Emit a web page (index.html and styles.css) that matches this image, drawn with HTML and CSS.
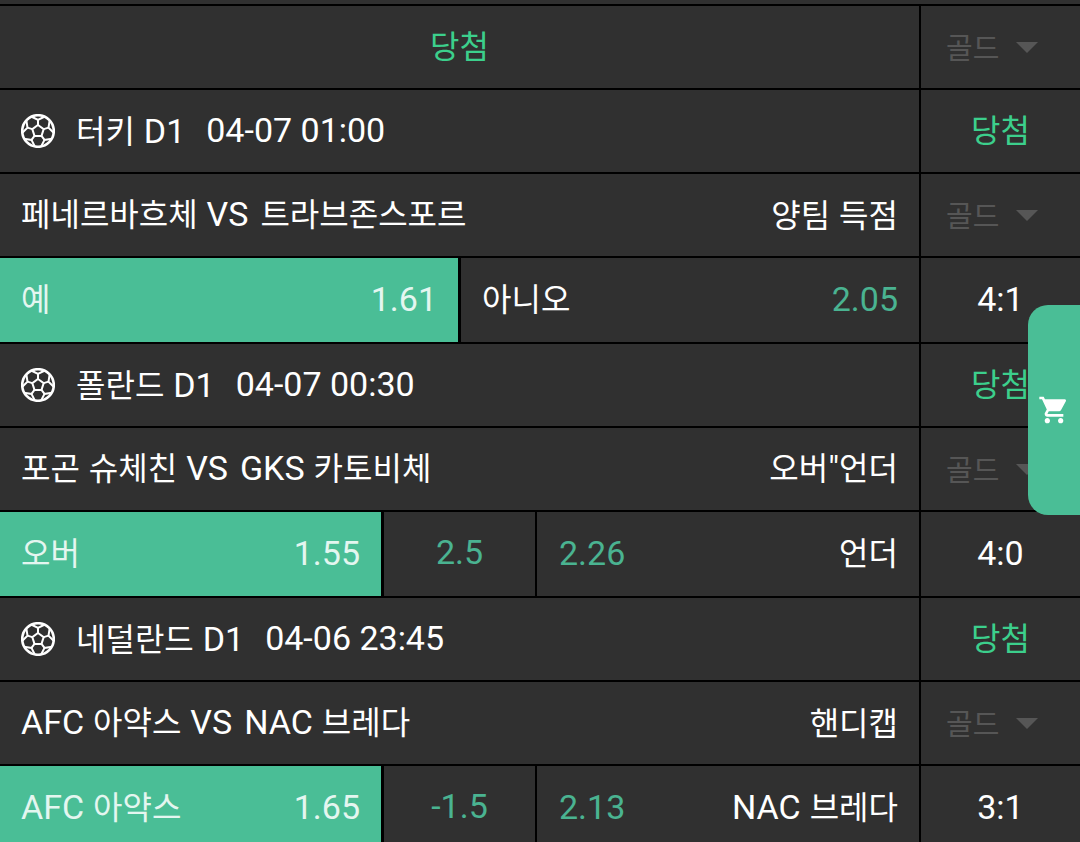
FILE: index.html
```html
<!DOCTYPE html>
<html lang="ko">
<head>
    <meta charset="UTF-8">
    <title>당첨 내역</title>
    <link rel="stylesheet" href="styles.css">
</head>
<body>
    <svg class="sprite" width="0" height="0">
        <symbol id="ball" viewBox="0 0 34 34">
            <g fill="none" stroke="#fff" stroke-width="2">
                <circle cx="17" cy="17" r="15.8" stroke-width="2.6"/>
                <path d="M17 11l5.7 4.1-2.2 6.8h-7l-2.2-6.8z"/>
                <path d="M17 11V6M22.7 15.1l4.8-1.5M20.5 21.9l3 4M13.5 21.9l-3 4M11.3 15.1l-4.8-1.5"/>
                <path d="M10.2 2.5L17 6l6.8-3.5M28.7 6.1l-1.2 7.5 5.4 5.4M31 24.8l-7.5 1.1L20 32.7M13.9 32.7l-3.4-6.8L3 24.8M1.1 19l5.4-5.4-1.2-7.5"/>
            </g>
        </symbol>
    </svg>

    <div class="list">
        <div class="row">
            <div class="main center win">당첨</div>
            <div class="side gold">골드<span class="arrow"></span></div>
        </div>

        <div class="row">
            <div class="main"><svg class="ball"><use href="#ball"/></svg><span>터키 <span class="en">D1</span></span><span class="en time">04-07 01:00</span></div>
            <div class="side center win">당첨</div>
        </div>
        <div class="row">
            <div class="main between"><span>페네르바흐체 <span class="en vs">VS</span> 트라브존스포르</span><span>양팀 득점</span></div>
            <div class="side gold">골드<span class="arrow"></span></div>
        </div>
        <div class="row bet">
            <div class="main">
                <div class="pick on half"><span>예</span><span class="en">1.61</span></div>
                <div class="pick rest"><span>아니오</span><span class="en odds">2.05</span></div>
            </div>
            <div class="side center en">4:1</div>
        </div>

        <div class="row">
            <div class="main"><svg class="ball"><use href="#ball"/></svg><span>폴란드 <span class="en">D1</span></span><span class="en time">04-07 00:30</span></div>
            <div class="side center win">당첨</div>
        </div>
        <div class="row">
            <div class="main between"><span>포곤 슈체친 <span class="en vs">VS</span> <span class="en">GKS</span> 카토비체</span><span>오버<span class="en">"</span>언더</span></div>
            <div class="side gold">골드<span class="arrow"></span></div>
        </div>
        <div class="row bet">
            <div class="main">
                <div class="pick on third"><span>오버</span><span class="en">1.55</span></div>
                <div class="pick line en odds">2.5</div>
                <div class="pick rest"><span class="en odds">2.26</span><span>언더</span></div>
            </div>
            <div class="side center en">4:0</div>
        </div>

        <div class="row">
            <div class="main"><svg class="ball"><use href="#ball"/></svg><span>네덜란드 <span class="en">D1</span></span><span class="en time">04-06 23:45</span></div>
            <div class="side center win">당첨</div>
        </div>
        <div class="row">
            <div class="main between"><span><span class="en">AFC</span> 아약스 <span class="en vs">VS</span> <span class="en">NAC</span> 브레다</span><span>핸디캡</span></div>
            <div class="side gold">골드<span class="arrow"></span></div>
        </div>
        <div class="row bet">
            <div class="main">
                <div class="pick on third"><span><span class="en">AFC</span> 아약스</span><span class="en">1.65</span></div>
                <div class="pick line en odds">-1.5</div>
                <div class="pick rest"><span class="en odds">2.13</span><span><span class="en">NAC</span> 브레다</span></div>
            </div>
            <div class="side center en">3:1</div>
        </div>
    </div>

    <div class="cart">
        <svg width="32" height="32" viewBox="0 0 24 24" fill="#fff"><path d="M7 18c-1.1 0-1.99.9-1.99 2S5.9 22 7 22s2-.9 2-2-.9-2-2-2zM1 2v2h2l3.6 7.59-1.35 2.45c-.16.28-.25.61-.25.96 0 1.1.9 2 2 2h12v-2H7.42c-.14 0-.25-.11-.25-.25l.03-.12.9-1.63h7.45c.75 0 1.41-.41 1.75-1.03l3.58-6.49c.08-.14.12-.31.12-.48 0-.55-.45-1-1-1H5.21l-.94-2H1zm16 16c-1.1 0-1.99.9-1.99 2s.89 2 1.99 2 2-.9 2-2-.9-2-2-2z"/></svg>
    </div>
</body>
</html>
```

FILE: styles.css
```css
html, body {
    height: 100%;
}
body {
    margin: 0;
    overflow: hidden;
    background: #303030;
    color: #fff;
    font-family: "Noto Sans CJK KR", Roboto, sans-serif;
    font-size: 32px;
    line-height: 40px;
}
.sprite {
    position: absolute;
}
.list {
    padding-top: 4px;
}
.row {
    display: flex;
    box-sizing: border-box;
    height: 84px;
    border-bottom: 2px solid #000;
}
.row:first-child {
    height: 86px;
    border-top: 2px solid #000;
}
.row.bet {
    height: 86px;
}
.main {
    flex: 1;
    display: flex;
    align-items: center;
    padding: 0 21px 3px 21px;
    min-width: 0;
}
.main.between {
    padding-bottom: 5px;
}
.bet .main {
    padding: 0;
    align-items: stretch;
}
.side {
    box-sizing: border-box;
    width: 161px;
    border-left: 2px solid #000;
    display: flex;
    align-items: center;
    padding-bottom: 3px;
}
.center {
    justify-content: center;
}
.between {
    justify-content: space-between;
}
.en {
    font-family: Roboto, sans-serif;
    font-size: 34px;
}
.vs {
    margin-right: 3px;
}
.win {
    color: #3ccf8c;
}
.main.win, .side.win {
    padding-bottom: 7px;
}
.gold {
    color: #565656;
    font-size: 29px;
    padding-left: 25px;
}
.arrow {
    width: 0;
    height: 0;
    margin-left: 17px;
    margin-top: 3px;
    border-left: 11px solid transparent;
    border-right: 11px solid transparent;
    border-top: 11px solid #565656;
}
.ball {
    width: 34px;
    height: 34px;
    margin-top: 3px;
    margin-right: 21px;
}
.time {
    margin-left: 21px;
}
.pick {
    box-sizing: border-box;
    display: flex;
    align-items: baseline;
    justify-content: space-between;
    padding: 19px 21px 0 22px;
}
.pick.on {
    background: #4abe96;
    background-clip: padding-box;
    border-right: 3px solid #000;
    color: #e4f6f0;
    padding-left: 21px;
}
.half {
    width: 461px;
}
.half + .rest {
    padding-left: 21px;
}
.third {
    width: 384px;
}
.line {
    width: 153px;
    justify-content: center;
    padding: 20px 0 0;
    border-right: 2px solid #000;
}
.rest {
    flex: 1;
}
.odds {
    color: #4ab391;
}
.cart {
    position: absolute;
    top: 305px;
    right: 0;
    width: 52px;
    height: 210px;
    display: flex;
    align-items: center;
    justify-content: center;
    background: #4abe96;
    border-radius: 20px 0 0 20px;
}
```
